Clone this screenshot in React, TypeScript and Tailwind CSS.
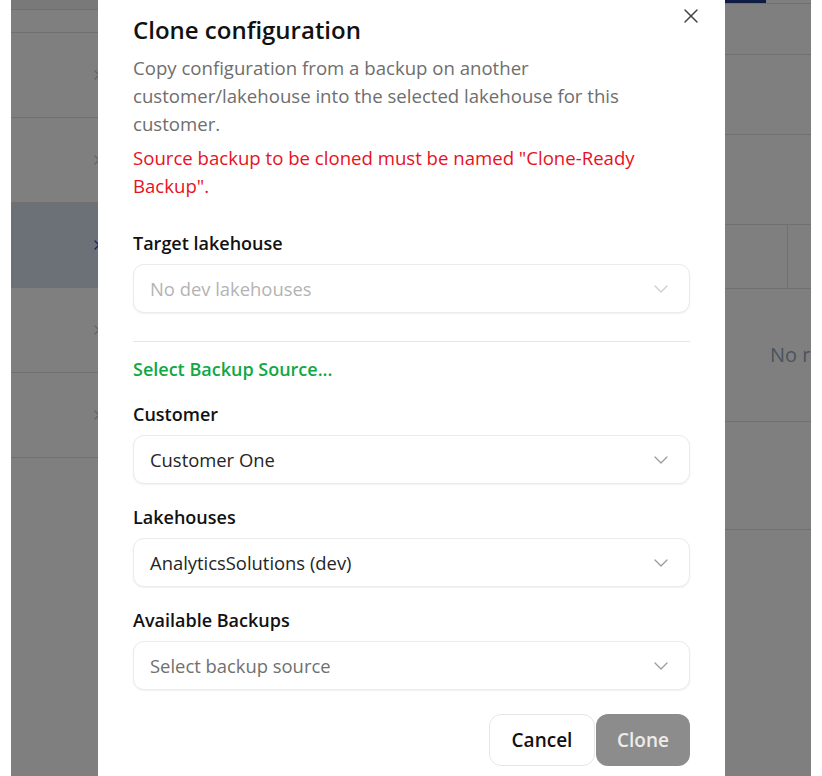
import { X, ChevronDown, ChevronRight } from 'lucide-react';

const font = { fontFamily: '"Open Sans", "Noto Sans", sans-serif' };

interface FieldProps {
  label: string;
  value: string;
  tone: 'disabled' | 'value' | 'placeholder';
}

const SelectField = ({ label, value, tone }: FieldProps) => {
  const textColor =
    tone === 'disabled' ? 'text-[#b3b3b3]' : tone === 'value' ? 'text-[#242424]' : 'text-[#707070]';
  return (
    <div className="flex flex-col gap-[7px]">
      <label className="text-lg font-semibold text-[#111]">{label}</label>
      <div className="h-[49px] rounded-[11px] border border-[#ebebeb] bg-white shadow-[0_1px_2px_rgba(0,0,0,0.06)] flex items-center justify-between pl-[16px] pr-[16px]">
        <span className={`text-[18.4px] leading-7 ${textColor}`}>{value}</span>
        <ChevronDown
          size={24}
          strokeWidth={1.25}
          className={tone === 'disabled' ? 'text-[#cccccc]' : 'text-[#9a9a9a]'}
        />
      </div>
    </div>
  );
};

const leftRows = [false, false, true, false, false];

export default function App() {
  return (
    <div className="relative w-[822px] h-[776px] overflow-hidden bg-white" style={font}>
      {/* page behind the overlay */}
      <div className="ml-[11px] w-[800px] h-full flex overflow-hidden">
        <div className="w-[400px] shrink-0 flex flex-col">
          <div className="h-[10px] border-b border-[#e0e0e0] bg-[#f2f2f2]" />
          <div className="h-[23px] border-b border-[#e0e0e0]" />
          {leftRows.map((active, i) => (
            <div
              key={i}
              className={`h-[85px] border-b border-[#e0e0e0] flex items-center pl-[78px] ${active ? 'bg-[#d9e0ef]' : ''}`}
            >
              <ChevronRight size={16} className={active ? 'text-[#2850c8]' : 'text-[#c8c8c8]'} />
            </div>
          ))}
        </div>
        <div className="flex-1 min-w-0 flex flex-col">
          <div className="h-[4px] border-b border-[#e0e0e0]" />
          <div className="h-[51px] border-b border-[#e0e0e0] relative">
            <div className="absolute -top-[4px] left-[314px] w-[41px] h-[3px] bg-[#1e3a8a]" />
          </div>
          <div className="h-[80px] border-b border-[#e0e0e0]" />
          <div className="h-[90px] border-b border-[#e0e0e0]" />
          <div className="h-[64px] border-b border-[#e0e0e0] flex">
            <div className="w-[377px] border-r border-[#e0e0e0]" />
          </div>
          <div className="h-[133px] border-b border-[#e0e0e0] flex items-center pl-[359px]">
            <span className="text-xl text-[#9aa6bd] whitespace-nowrap">No records found</span>
          </div>
          <div className="h-[108px] border-b border-[#e0e0e0]" />
        </div>
      </div>

      {/* overlay */}
      <div className="absolute top-0 bottom-0 left-[11px] w-[800px] bg-black/50" />

      {/* dialog */}
      <div className="absolute top-0 left-[98px] w-[627px] h-[800px] bg-white px-[35px] pt-[14px]">
        <button className="absolute top-[4px] right-[22px] text-[#444]">
          <X size={24} strokeWidth={1.5} />
        </button>
        <h2 className="text-2xl leading-8 font-semibold text-[#111]">Clone configuration</h2>
        <p className="mt-[8px] text-[18.6px] leading-7 text-[#6e6e6e] pr-[60px]">
          Copy configuration from a backup on another customer/lakehouse into the selected lakehouse for this
          customer.
        </p>
        <p className="mt-[6px] text-[18.6px] leading-7 text-[#e81123] pr-[40px]">
          Source backup to be cloned must be named "Clone-Ready Backup".
        </p>

        <div className="mt-[29px]">
          <SelectField label="Target lakehouse" value="No dev lakehouses" tone="disabled" />
        </div>

        <div className="mt-[28px] border-t border-[#e4e6ec]" />

        <div className="mt-[13px] text-lg font-semibold text-[#10a843]">Select Backup Source...</div>

        <div className="mt-[17px] flex flex-col gap-[19px]">
          <SelectField label="Customer" value="Customer One" tone="value" />
          <SelectField label="Lakehouses" value="AnalyticsSolutions (dev)" tone="value" />
          <SelectField label="Available Backups" value="Select backup source" tone="placeholder" />
        </div>

        <div className="mt-[24px] flex justify-end gap-px">
          <button className="w-[106px] h-[52px] rounded-[12px] border border-[#e6e6e6] bg-white text-[19px] font-semibold text-[#111]">
            Cancel
          </button>
          <button className="w-[94px] h-[52px] rounded-[12px] bg-[#8c8c8c] text-[19px] font-semibold text-[#ececec]">
            Clone
          </button>
        </div>
      </div>
    </div>
  );
}
